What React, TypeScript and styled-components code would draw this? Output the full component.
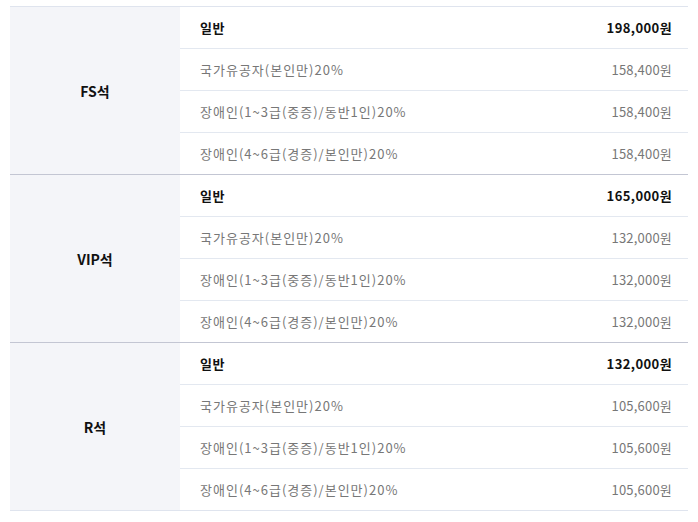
import styled, { createGlobalStyle } from "styled-components";

const GlobalStyle = createGlobalStyle`
  body {
    margin: 0;
    background: #ffffff;
    font-family: "Noto Sans CJK KR", "Noto Sans", sans-serif;
  }
`;

const StyledWrapper = styled.div`
  padding: 6px 10px 0 10px;
`;

const StyledTable = styled.table`
  width: 678px;
  border-collapse: collapse;
  border-top: 1px solid #dfe4ee;
  table-layout: fixed;
`;

const StyledGroupRow = styled.tr<{ $last?: boolean }>`
  border-bottom: 1px solid ${(p) => (p.$last ? "#dfe4ee" : "#c3c6d3")};
`;

const StyledRow = styled.tr<{ $last?: boolean }>`
  border-bottom: 1px solid #e3e8f0;
`;

const StyledSeat = styled.th`
  width: 170px;
  background-color: #f4f5f9;
  font-size: 14px;
  font-weight: 700;
  color: #111;
  text-align: center;
  vertical-align: middle;
  padding: 0;
`;

const StyledLabel = styled.td<{ $main?: boolean }>`
  height: 41px;
  padding: 0 0 0 20px;
  font-size: 13px;
  font-weight: ${(p) => (p.$main ? 700 : 400)};
  letter-spacing: ${(p) => (p.$main ? "0.5px" : "1px")};
  color: ${(p) => (p.$main ? "#111" : "#777")};
  vertical-align: middle;
  white-space: nowrap;
`;

const StyledPrice = styled.td<{ $main?: boolean }>`
  padding: 0 16px 0 0;
  text-align: right;
  font-size: 13px;
  font-weight: ${(p) => (p.$main ? 700 : 400)};
  letter-spacing: ${(p) => (p.$main ? "0.4px" : "0.2px")};
  color: ${(p) => (p.$main ? "#111" : "#777")};
  vertical-align: middle;
  white-space: nowrap;
`;

type Group = {
  seat: string;
  main: string;
  sale: string[];
};

const labels = [
  "국가유공자(본인만)20%",
  "장애인(1~3급(중증)/동반1인)20%",
  "장애인(4~6급(경증)/본인만)20%",
];

const groups: Group[] = [
  { seat: "FS석", main: "198,000원", sale: ["158,400원", "158,400원", "158,400원"] },
  { seat: "VIP석", main: "165,000원", sale: ["132,000원", "132,000원", "132,000원"] },
  { seat: "R석", main: "132,000원", sale: ["105,600원", "105,600원", "105,600원"] },
];

export default function App() {
  return (
    <StyledWrapper>
      <GlobalStyle />
      <StyledTable>
        <tbody>
          {groups.map((g, gi) => {
            const last = gi === groups.length - 1;
            return [
              <StyledRow key={g.seat + "-main"}>
                <StyledSeat rowSpan={4}>{g.seat}</StyledSeat>
                <StyledLabel $main>일반</StyledLabel>
                <StyledPrice $main>{g.main}</StyledPrice>
              </StyledRow>,
              ...labels.map((l, i) => {
                const Row = i === labels.length - 1 ? StyledGroupRow : StyledRow;
                return (
                  <Row key={g.seat + i} $last={last}>
                    <StyledLabel>{l}</StyledLabel>
                    <StyledPrice>{g.sale[i]}</StyledPrice>
                  </Row>
                );
              }),
            ];
          })}
        </tbody>
      </StyledTable>
    </StyledWrapper>
  );
}
